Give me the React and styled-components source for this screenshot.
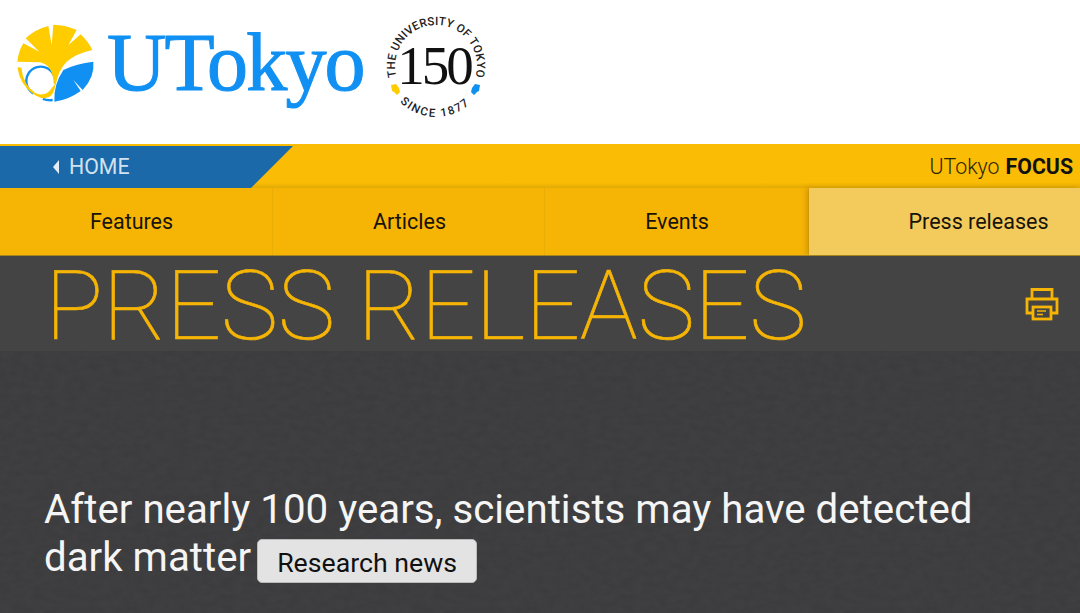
import React from 'react';
import styled, { createGlobalStyle } from 'styled-components';

const GlobalStyle = createGlobalStyle`
  html, body {
    margin: 0;
    padding: 0;
    background: #fff;
    font-family: Roboto, "Liberation Sans", sans-serif;
  }
`;

const grain = `url("data:image/svg+xml,%3Csvg xmlns='http://www.w3.org/2000/svg' width='400' height='400'%3E%3Cfilter id='n'%3E%3CfeTurbulence type='fractalNoise' baseFrequency='0.09 0.16' numOctaves='3'/%3E%3CfeColorMatrix values='0 0 0 0 0 0 0 0 0 0 0 0 0 0 0 0 0 0 1.6 -0.5'/%3E%3C/filter%3E%3Crect width='400' height='400' filter='url(%23n)' opacity='0.07'/%3E%3C/svg%3E")`;

const Page = styled.div`
  width: 1080px;
  height: 613px;
  overflow: hidden;
  display: flex;
  flex-direction: column;
`;

const Header = styled.header`
  height: 144px;
  background: #fff;
  display: flex;
  align-items: flex-start;
  padding: 20px 0 0 10px;
  box-sizing: border-box;
`;

const Leaf = styled.svg`
  width: 90px;
  height: 85px;
  flex: none;
`;

const Wordmark = styled.div`
  font-family: "Liberation Serif", serif;
  font-size: 82px;
  line-height: 92px;
  letter-spacing: -1.8px;
  color: #1090f2;
  -webkit-text-stroke: 1.1px #1090f2;
  margin: -3px 0 0 7px;
  flex: none;
  width: 269px;
`;

const Badge = styled.svg`
  width: 120px;
  height: 120px;
  flex: none;
  margin: -14px 0 0 0;
`;

const TopBar = styled.div`
  height: 44px;
  background: linear-gradient(#fbbc05 0, #fbbc05 88%, #e3aa05 100%);
  display: flex;
  justify-content: space-between;
  align-items: flex-end;
`;

const HomeTab = styled.a`
  width: 293px;
  height: 42px;
  background: #1b69a9;
  clip-path: polygon(0 0, 100% 0, 251px 100%, 0 100%);
  display: flex;
  align-items: center;
  gap: 10px;
  padding: 0 0 1px 53px;
  box-sizing: border-box;
  color: #d3e2ef;
  font-size: 21.3px;
`;

const Caret = styled.span`
  width: 0;
  height: 0;
  border-top: 7px solid transparent;
  border-bottom: 7px solid transparent;
  border-right: 6px solid #e6eef5;
`;

const Focus = styled.div`
  height: 44px;
  display: flex;
  align-items: center;
  padding-right: 7px;
  font-size: 21.3px;
  font-weight: 300;
  color: #2a2406;

  b {
    font-weight: 700;
    color: #111;
    margin-left: 6px;
  }
`;

const Nav = styled.nav`
  height: 67px;
  display: grid;
  grid-template-columns: 273px 272px 264px 271px;
  background: #f6b505;
`;

const NavItem = styled.a`
  display: flex;
  align-items: center;
  justify-content: center;
  font-size: 21.5px;
  color: #17130a;
  padding: 0 ${({ $right }) => $right || 0}px 0 ${({ $left }) => $left || 0}px;
  border-right: 1px solid ${({ $active }) => ($active ? 'transparent' : '#eaac06')};
  background: ${({ $active }) => ($active ? '#f2cb5c' : 'transparent')};
  box-shadow: ${({ $active }) => ($active ? '-3px 0 5px rgba(150, 100, 0, 0.35)' : 'none')};
`;

const TitleBar = styled.div`
  height: 96px;
  box-sizing: border-box;
  border-top: 1px solid #a3841f;
  background: #444;
  display: flex;
  justify-content: space-between;
  align-items: center;
  padding: 0 21px 0 45px;
`;

const Title = styled.h1`
  margin: 0;
  font-size: 97px;
  line-height: 92px;
  font-weight: 100;
  letter-spacing: -0.4px;
  -webkit-text-stroke: 0.7px #f6b505;
  color: #f6b505;
  white-space: nowrap;
  position: relative;
  top: 2px;
`;

const PrintIcon = styled.svg`
  width: 34px;
  height: 34px;
  flex: none;
`;

const Content = styled.main`
  flex: 1;
  background: #3f3f41 ${grain};
  padding: 135px 44px 0;
`;

const Headline = styled.h2`
  margin: 0;
  font-size: 40.25px;
  line-height: 48px;
  font-weight: 400;
  color: #f5f5f5;
`;

const Tag = styled.span`
  display: inline-block;
  background: #e3e3e3;
  border: 1px solid #bbb;
  box-sizing: border-box;
  color: #111;
  font-size: 26.7px;
  line-height: 46px;
  height: 44px;
  padding: 0 19px;
  margin-left: 6px;
  border-radius: 5px;
  vertical-align: -1px;
`;

const App = () => (
  <Page>
    <GlobalStyle />
    <Header>
      <Leaf viewBox="0 0 270 255">
        <circle
          cx="92"
          cy="183"
          r="43"
          fill="none"
          stroke="#1090f2"
          strokeWidth="7"
          strokeDasharray="170 300"
          transform="rotate(120 92 183)"
        />
        <path fill="#fc0" d="M22 142 L34 143 Q40 195 75 218 Q105 234 125 205 L137 190 Q133 225 115 232 Q95 240 70 222 Q30 195 22 142 Z" />
        <path
          fill="#fc0"
          d="M22 125 Q25 95 40 70 L88 95 L47 55 Q75 28 115 18 L125 75 L130 14 Q170 15 200 30 L175 75 L212 43 Q235 65 247 90 Q200 100 170 125 Q145 150 137 195 L131 190 Q128 135 90 127 Z"
        />
        <path fill="#1090f2" d="M160 150 Q200 130 250 125 Q255 170 218 210 L190 180 L212 213 Q175 240 133 245 Q130 195 160 150 Z" />
        <path fill="#1090f2" d="M100 234 Q115 239 128 236 L128 244 Q110 245 97 240 Z" />
      </Leaf>
      <Wordmark>UTokyo</Wordmark>
      <Badge viewBox="0 0 120 120">
        <defs>
          <path id="arcTop" d="M20.4 70.6 A41 41 0 1 1 99.6 70.6" />
          <path id="arcBottom" d="M24 96 A51 51 0 0 0 96 96" />
        </defs>
        <text fontFamily="Roboto, sans-serif" fontSize="11.5" fontWeight="500" fill="#222">
          <textPath href="#arcTop" textLength="150">THE UNIVERSITY OF TOKYO</textPath>
        </text>
        <text fontFamily="Roboto, sans-serif" fontSize="11.5" fontWeight="500" fill="#222">
          <textPath href="#arcBottom" textLength="76">SINCE 1877</textPath>
        </text>
        <text x="58" y="78" textAnchor="middle" fontFamily="'Liberation Serif', serif" fontSize="55" letterSpacing="-3" fill="#111">150</text>
        <path fill="#fc0" d="M15 79 L20 78 L23 82 L24 86 L21 89 L18 86 L16 85 Z" />
        <path fill="#1090f2" d="M104 79 L99 78 L96 82 L95 86 L98 89 L101 86 L103 85 Z" />
      </Badge>
    </Header>
    <TopBar>
      <HomeTab>
        <Caret />
        HOME
      </HomeTab>
      <Focus>
        UTokyo <b>FOCUS</b>
      </Focus>
    </TopBar>
    <Nav>
      <NavItem $right={9}>Features</NavItem>
      <NavItem $left={2}>Articles</NavItem>
      <NavItem $left={1}>Events</NavItem>
      <NavItem $active $left={69}>Press releases</NavItem>
    </Nav>
    <TitleBar>
      <Title>PRESS RELEASES</Title>
      <PrintIcon viewBox="0 0 34 34" fill="none" stroke="#f6b505" strokeWidth="2.8">
        <path d="M7 12 V2.5 H27 V12" />
        <path d="M8 26 H2 V12 H32 V26 H26" />
        <rect x="8" y="20" width="18" height="12" />
        <path d="M12 24 H21 M12 27.5 H18" strokeWidth="1.6" />
      </PrintIcon>
    </TitleBar>
    <Content>
      <Headline>
        After nearly 100 years, scientists may have detected dark matter
        <Tag>Research news</Tag>
      </Headline>
    </Content>
  </Page>
);

export default App;
